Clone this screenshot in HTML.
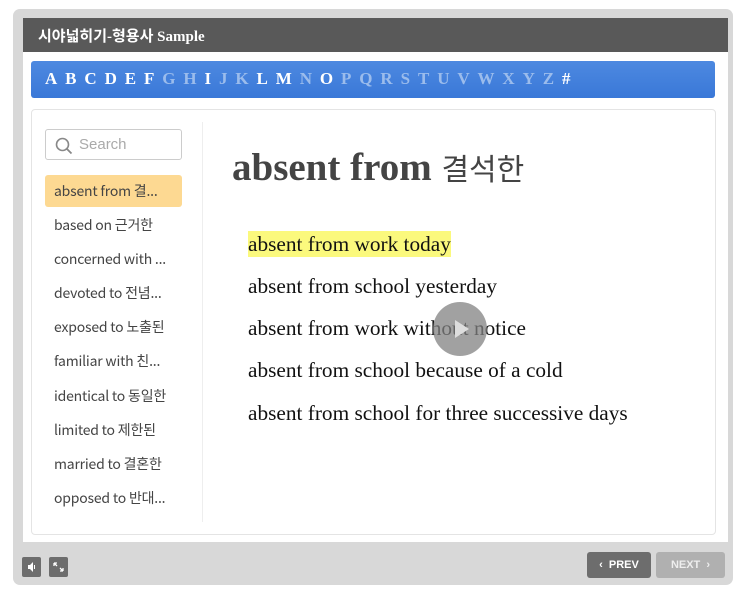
<!DOCTYPE html>
<html><head><meta charset="utf-8"><style>
*{margin:0;padding:0;box-sizing:border-box}
body{width:743px;height:594px;background:#fff;position:relative;overflow:hidden;font-family:"Liberation Sans","Noto Sans CJK KR",sans-serif}
.frame{position:absolute;left:13px;top:9px;width:720px;height:576px;background:#d8d8d8;border-radius:7px}
.inner{position:absolute;left:23px;top:18px;width:705px;height:524px;background:#fff}
.hdr{position:absolute;left:23px;top:18px;width:705px;height:34px;background:#595959;color:#fff;font:bold 15px "Liberation Serif","Noto Sans CJK KR",serif;padding:7px 0 0 15px}
.alpha{position:absolute;left:31px;top:61px;width:684px;height:37px;border-radius:3px;background:linear-gradient(#4d89e0,#3a78d8);padding:8px 0 0 14px;font:bold 17px "Liberation Serif",serif;color:#fff;white-space:nowrap}
.alpha span{margin-right:7.9px}
.alpha .d{color:#9bbcec}
.card{position:absolute;left:31px;top:109px;width:685px;height:426px;border:1px solid #e4e4e4;border-radius:4px;background:#fff}
.div{position:absolute;left:202px;top:122px;width:1px;height:400px;background:#eee}
.search{position:absolute;left:45px;top:129px;width:137px;height:31px;border:1px solid #ccc;border-radius:3px;color:#aaa;font-size:15px;padding:6px 0 0 33px;line-height:18px}
.item{position:absolute;left:45px;width:137px;height:32px;font-size:14px;line-height:18px;color:#444;padding:7px 0 0 9px;white-space:nowrap;border-radius:3px;font-family:"Noto Sans CJK KR",sans-serif;letter-spacing:-0.2px}
.sel{background:#fdd992}
.title{position:absolute;left:232px;top:145px;font:bold 39px "Liberation Serif",serif;color:#444;white-space:nowrap}
.title span{font:400 30px "Noto Sans CJK KR",sans-serif}
.s{position:absolute;left:248px;font:21.3px "Liberation Serif",serif;color:#111;white-space:nowrap;line-height:24px}
.hl{background:#fbf97d;padding:1px 0 1px}
.play{position:absolute;left:433px;top:302px;width:54px;height:54px;border-radius:50%;background:rgba(130,130,130,.75)}
.btn{position:absolute;top:557px;width:19px;height:20px;background:#6d6d6d;border-radius:2px}
.pn{position:absolute;top:552px;height:26px;border-radius:3px;color:#fff;font:bold 11px "Liberation Sans",sans-serif;padding-top:7px;text-align:center}
</style></head><body>
<div class="frame"></div>
<div class="inner"></div>
<div class="hdr">시야넓히기-형용사 Sample</div>
<div class="alpha"><span>A</span><span>B</span><span>C</span><span>D</span><span>E</span><span>F</span><span class="d">G</span><span class="d">H</span><span>I</span><span class="d">J</span><span class="d">K</span><span>L</span><span>M</span><span class="d">N</span><span>O</span><span class="d">P</span><span class="d">Q</span><span class="d">R</span><span class="d">S</span><span class="d">T</span><span class="d">U</span><span class="d">V</span><span class="d">W</span><span class="d">X</span><span class="d">Y</span><span class="d">Z</span><span>#</span></div>
<div class="card"></div>
<div class="div"></div>
<div class="search">Search<svg style="position:absolute;left:9px;top:7px" width="18" height="18" viewBox="0 0 18 18"><circle cx="7.5" cy="7.5" r="6" fill="none" stroke="#888" stroke-width="1.6"/><line x1="12" y1="12" x2="16.5" y2="16.5" stroke="#888" stroke-width="1.8"/></svg></div>
<div class="item sel" style="top:175px">absent from 결...</div>
<div class="item" style="top:209px">based on 근거한</div>
<div class="item" style="top:243px">concerned with ...</div>
<div class="item" style="top:277px">devoted to 전념...</div>
<div class="item" style="top:311px">exposed to 노출된</div>
<div class="item" style="top:345px">familiar with 친...</div>
<div class="item" style="top:380px">identical to 동일한</div>
<div class="item" style="top:414px">limited to 제한된</div>
<div class="item" style="top:448px">married to 결혼한</div>
<div class="item" style="top:482px">opposed to 반대...</div>
<div class="title">absent from <span>결석한</span></div>
<div class="s" style="top:232px"><span class="hl">absent from work today</span></div>
<div class="s" style="top:274px">absent from school yesterday</div>
<div class="s" style="top:316px">absent from work without notice</div>
<div class="s" style="top:358px">absent from school because of a cold</div>
<div class="s" style="top:401px">absent from school for three successive days</div>
<div class="play"><svg width="54" height="54" viewBox="0 0 54 54"><path d="M22 18 L36 27 L22 36 Z" fill="#ddd"/></svg></div>
<div class="btn" style="left:22px"><svg width="19" height="20"><path d="M6 8h2l3-3v10l-3-3H6z" fill="#fff"/><path d="M12.5 8v4" stroke="#fff"/></svg></div>
<div class="btn" style="left:49px"><svg width="19" height="20"><path d="M5 6l3 3M5 6h3M5 6v3M14 14l-3-3M14 14h-3M14 14v-3" stroke="#fff" stroke-width="1.3" fill="none"/></svg></div>
<div class="pn" style="left:587px;width:64px;background:#6d6d6d">‹&nbsp; PREV</div>
<div class="pn" style="left:656px;width:69px;background:#b0b0b0;color:#eee">NEXT &nbsp;›</div>
</body></html>
